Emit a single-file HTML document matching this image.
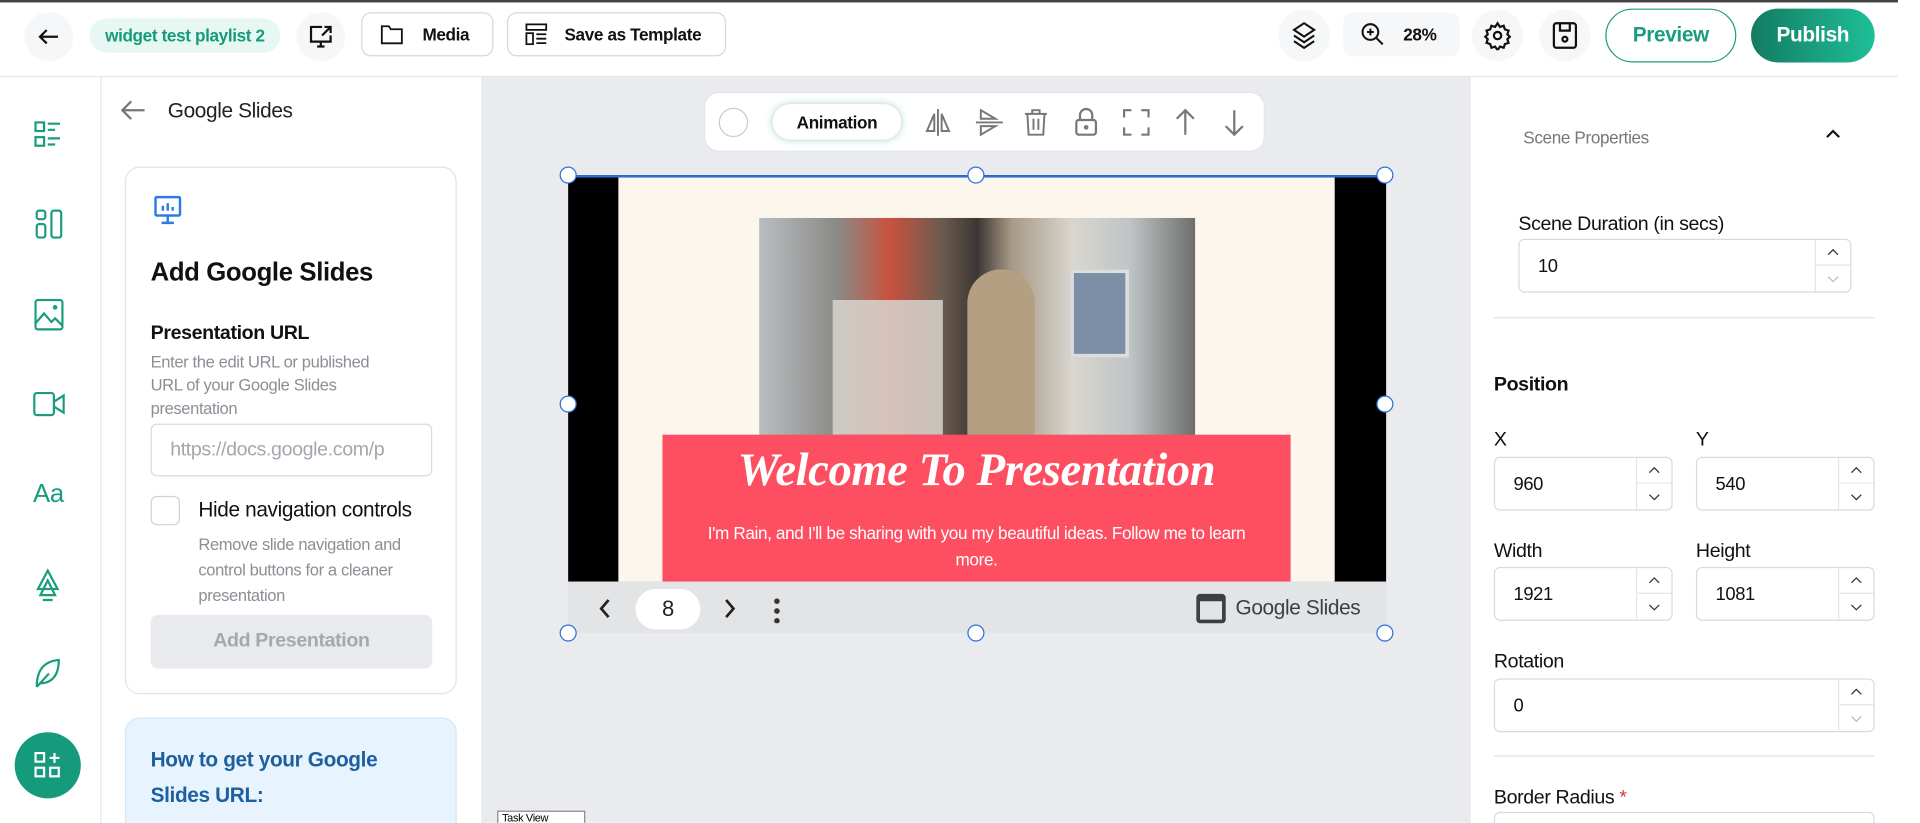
<!DOCTYPE html>
<html><head><meta charset="utf-8"><style>
*{box-sizing:border-box;margin:0;padding:0}
body{width:1920px;height:823px;overflow:hidden;background:#fff;font-family:"Liberation Sans",sans-serif}
#w{width:1568px;height:672px;transform:scale(1.22449);transform-origin:0 0;position:relative;background:#fff;overflow:hidden;letter-spacing:-0.3px}
.a{position:absolute}
.ib{position:absolute;border-radius:50%;background:#f6f7f8;display:flex;align-items:center;justify-content:center}
.btn{position:absolute;border:1px solid #d4d7db;border-radius:8px;background:#fff;display:flex;align-items:center;font-size:14px;color:#111;font-weight:bold}
.lbl{position:absolute;font-size:16px;color:#111}
.inp{position:absolute;border:1px solid #d7dbe0;border-radius:5px;background:#fff;font-size:15px;color:#111;padding-left:15px;display:flex;align-items:center}
.sp{position:absolute;right:0;top:0;bottom:0;width:29px;border-left:1px solid #e3e6ea}
.sp div{height:50%;display:flex;align-items:center;justify-content:center}
.sp div:first-child{border-bottom:1px solid #e3e6ea}
svg{display:block}
</style></head><body><div id="w">
<div class="a" style="left:0;top:0;width:1568px;height:2px;background:#444"></div>
<div class="a" style="left:0;top:62px;width:1550px;height:1px;background:#e4e6ea"></div>
<div class="ib" style="left:20px;top:10px;width:40px;height:40px"><svg width="22" height="22" viewBox="0 0 24 24" fill="none" stroke="#111" stroke-width="2"><path d="M20 12H4M10 6l-6 6 6 6"/></svg></div>
<div class="a" style="left:73px;top:15px;width:156px;height:28px;border-radius:14px;background:#e7f8f2;color:#169a7c;font-size:14px;font-weight:bold;display:flex;align-items:center;justify-content:center">widget test playlist 2</div>
<div class="ib" style="left:242px;top:10px;width:40px;height:40px"><svg width="24" height="24" viewBox="0 0 24 24" fill="none" stroke="#111" stroke-width="1.8"><path d="M13 4H4v12h16v-5M9 20h6M12 16v4M15 4h5v5M20 4l-7 7"/></svg></div>
<div class="btn" style="left:295px;top:10px;width:108px;height:36px;padding-left:14px"><svg width="20" height="18" viewBox="0 0 24 22" fill="none" stroke="#111" stroke-width="1.8"><path d="M2 3h7l2 3h11v14H2z"/></svg><span style="margin-left:15px">Media</span></div>
<div class="btn" style="left:414px;top:10px;width:179px;height:36px;padding-left:14px"><svg width="18" height="18" viewBox="0 0 20 20" fill="none" stroke="#111" stroke-width="1.6"><rect x="1" y="1" width="18" height="5"/><rect x="1" y="9" width="6" height="10"/><path d="M10 10h9M10 14h9M10 18h9"/></svg><span style="margin-left:14px">Save as Template</span></div>
<div class="ib" style="left:1044px;top:8px;width:42px;height:42px"><svg width="22" height="24" viewBox="0 0 24 26" fill="none" stroke="#111" stroke-width="1.8"><path d="M12 2l9 6-9 6-9-6z M3 13l9 6 9-6 M3 18l9 6 9-6"/></svg></div>
<div class="a" style="left:1097px;top:10px;width:95px;height:36px;border-radius:8px;background:#f6f7f8;display:flex;align-items:center;padding-left:13px;font-size:14px;font-weight:bold;color:#111"><svg width="22" height="22" viewBox="0 0 24 24" fill="none" stroke="#111" stroke-width="1.8"><circle cx="10" cy="10" r="7"/><path d="M15 15l6 6M10 7v6M7 10h6"/></svg><span style="margin-left:14px">28%</span></div>
<div class="ib" style="left:1202px;top:8px;width:42px;height:42px"><svg width="24" height="24" viewBox="0 0 24 24" fill="none" stroke="#111" stroke-width="1.8"><circle cx="12" cy="12" r="3"/><path d="M12 2l2 3 3-1 1 3 3 1-1 3 2 2-2 2 1 3-3 1-1 3-3-1-2 3-2-3-3 1-1-3-3-1 1-3-2-2 2-2-1-3 3-1 1-3 3 1z"/></svg></div>
<div class="ib" style="left:1257px;top:8px;width:42px;height:42px"><svg width="22" height="24" viewBox="0 0 22 24" fill="none" stroke="#111" stroke-width="1.8"><rect x="2" y="2" width="18" height="20" rx="2"/><path d="M7 2v6h8V2"/><circle cx="11" cy="15" r="2"/></svg></div>
<div class="a" style="left:1311px;top:7px;width:107px;height:44px;border:1.5px solid #1e9e82;border-radius:22px;color:#1a9c7d;font-size:17px;font-weight:bold;display:flex;align-items:center;justify-content:center">Preview</div>
<div class="a" style="left:1430px;top:7px;width:101px;height:44px;border-radius:22px;background:linear-gradient(90deg,#137b62,#1fbf98);color:#fff;font-size:17px;font-weight:bold;display:flex;align-items:center;justify-content:center">Publish</div>
<div class="a" style="left:82px;top:63px;width:1px;height:609px;background:#e4e6ea"></div>
<svg class="a" style="left:27px;top:98px" width="24" height="24" viewBox="0 0 24 24" fill="none" stroke="#1a9c7d" stroke-width="1.8"><rect x="2" y="2" width="7" height="7"/><rect x="2" y="14" width="7" height="7"/><path d="M12 3h10M12 8h6M12 15h10M12 20h6"/></svg>
<svg class="a" style="left:29px;top:170px" width="22" height="26" viewBox="0 0 22 26" fill="none" stroke="#1a9c7d" stroke-width="1.8"><rect x="1" y="2" width="7" height="7" rx="2"/><rect x="1" y="13" width="7" height="11" rx="2"/><rect x="13" y="2" width="8" height="22" rx="2"/></svg>
<svg class="a" style="left:28px;top:244px" width="24" height="26" viewBox="0 0 24 26" fill="none" stroke="#1a9c7d" stroke-width="1.8"><rect x="1" y="1" width="22" height="24" rx="2"/><path d="M1 20l7-8 6 7 3-3 6 6"/><circle cx="17" cy="7" r="1"/></svg>
<svg class="a" style="left:27px;top:320px" width="26" height="20" viewBox="0 0 26 20" fill="none" stroke="#1a9c7d" stroke-width="1.8"><rect x="1" y="1" width="16" height="18" rx="2"/><path d="M17 8l8-5v14l-8-5"/></svg>
<div class="a" style="left:27px;top:392px;font-size:21px;color:#1a9c7d">Aa</div>
<svg class="a" style="left:28px;top:464px" width="22" height="28" viewBox="0 0 22 28" fill="none" stroke="#1a9c7d" stroke-width="1.8"><path d="M11 2L3 17h16z M11 10L5 22h12z M7 26h8"/></svg>
<svg class="a" style="left:28px;top:537px" width="22" height="26" viewBox="0 0 22 26" fill="none" stroke="#1a9c7d" stroke-width="1.8"><path d="M2 24C2 10 8 3 20 2c0 13-6 19-15 19M2 24l10-11"/></svg>
<div class="a" style="left:12px;top:598px;width:54px;height:54px;border-radius:50%;background:#169a7c"><svg style="margin:16px" width="22" height="22" viewBox="0 0 22 22" fill="none" stroke="#fff" stroke-width="1.8"><rect x="1" y="1" width="7" height="7"/><rect x="1" y="13" width="7" height="7"/><rect x="13" y="13" width="7" height="7"/><path d="M16.5 1v8M12.5 5h8"/></svg></div>
<svg class="a" style="left:98px;top:80px" width="22" height="20" viewBox="0 0 24 22" fill="none" stroke="#777" stroke-width="2"><path d="M22 11H3M10 3l-8 8 8 8"/></svg>
<div class="a" style="left:137px;top:81px;font-size:17px;color:#222">Google Slides</div>
<div class="a" style="left:102px;top:136px;width:271px;height:431px;border:1px solid #e1e4e8;border-radius:12px"></div>
<svg class="a" style="left:125px;top:159px" width="24" height="26" viewBox="0 0 24 26" fill="none" stroke="#2b7be3" stroke-width="2"><rect x="2" y="2" width="20" height="15" rx="1"/><path d="M12 17v5M7 23h10M8 13V9M12 13V7M16 13v-3"/></svg>
<div class="a" style="left:123px;top:211px;font-size:21px;font-weight:bold;color:#111">Add Google Slides</div>
<div class="a" style="left:123px;top:264px;font-size:16px;color:#111;font-weight:bold">Presentation URL</div>
<div class="a" style="left:123px;top:286px;width:240px;font-size:13.5px;line-height:19px;color:#8a8f95;white-space:nowrap">Enter the edit URL or published<br>URL of your Google Slides<br>presentation</div>
<div class="inp" style="left:123px;top:346px;width:230px;height:43px;color:#a3a7ad;font-size:16px;overflow:hidden;white-space:nowrap">https://docs.google.com/p</div>
<div class="a" style="left:123px;top:405px;width:24px;height:24px;border:1px solid #cfd3d8;border-radius:5px"></div>
<div class="a" style="left:162px;top:407px;font-size:17px;color:#111">Hide navigation controls</div>
<div class="a" style="left:162px;top:434px;width:200px;font-size:13.5px;line-height:21px;color:#8a8f95">Remove slide navigation and control buttons for a cleaner presentation</div>
<div class="a" style="left:123px;top:502px;width:230px;height:44px;border-radius:6px;background:#e8eaed;color:#a5a9ae;font-size:16px;font-weight:bold;display:flex;align-items:center;justify-content:center">Add Presentation</div>
<div class="a" style="left:102px;top:586px;width:271px;height:100px;border:1px solid #d6e6f3;border-radius:12px;background:#e8f4fd"></div>
<div class="a" style="left:123px;top:606px;width:220px;font-size:17px;line-height:29px;color:#1d5fa0;font-weight:bold">How to get your Google Slides URL:</div>
<div class="a" style="left:393px;top:63px;width:807px;height:609px;background:#e9ebee"></div>
<div class="a" style="left:575px;top:75px;width:458px;height:49px;background:#fff;border-radius:12px;border:1px solid #e3e5e8"></div>
<div class="a" style="left:587px;top:88px;width:24px;height:24px;border:1px solid #ccc;border-radius:50%"></div>
<div class="a" style="left:630px;top:84px;width:107px;height:31px;border-radius:16px;background:#fff;box-shadow:0 0 6px #bfe6da;border:1px solid #e3e5e8;font-size:14px;font-weight:bold;color:#111;display:flex;align-items:center;justify-content:center">Animation</div>
<svg class="a" style="left:755px;top:88px" width="22" height="24" viewBox="0 0 22 24" fill="none" stroke="#777" stroke-width="1.6"><path d="M11 1v22M8 5L2 19h6zM14 5l6 14h-6z"/></svg>
<svg class="a" style="left:796px;top:88px" width="24" height="24" viewBox="0 0 24 24" fill="none" stroke="#777" stroke-width="1.6"><path d="M1 12h22M5 2v7l12-0zM5 22v-7l12 0z"/></svg>
<svg class="a" style="left:836px;top:88px" width="20" height="24" viewBox="0 0 20 24" fill="none" stroke="#777" stroke-width="1.6"><path d="M1 5h18M7 5V2h6v3M3 5l1 17h12l1-17M8 9v9M12 9v9"/></svg>
<svg class="a" style="left:877px;top:88px" width="20" height="24" viewBox="0 0 20 24" fill="none" stroke="#777" stroke-width="1.8"><rect x="2" y="10" width="16" height="12" rx="2"/><path d="M5 10V6a5 5 0 0110 0v4"/><circle cx="10" cy="16" r="1"/></svg>
<svg class="a" style="left:917px;top:89px" width="22" height="22" viewBox="0 0 22 22" fill="none" stroke="#777" stroke-width="1.8"><path d="M1 7V1h6M15 1h6v6M21 15v6h-6M7 21H1v-6"/></svg>
<svg class="a" style="left:958px;top:88px" width="20" height="24" viewBox="0 0 20 24" fill="none" stroke="#777" stroke-width="1.8"><path d="M10 22V2M3 9l7-7 7 7"/></svg>
<svg class="a" style="left:998px;top:88px" width="20" height="24" viewBox="0 0 20 24" fill="none" stroke="#777" stroke-width="1.8"><path d="M10 2v20M3 15l7 7 7-7"/></svg>
<div class="a" style="left:464px;top:143px;width:668px;height:332px;background:#000"></div>
<div class="a" style="left:464px;top:143px;width:668px;height:2px;background:#2f6fd6"></div>
<div class="a" style="left:505px;top:145px;width:585px;height:330px;background:#fdf6ec"></div>
<div class="a" style="left:620px;top:178px;width:356px;height:178px;background:linear-gradient(90deg,#b8bdc1 0%,#8a8a86 18%,#c8523f 30%,#6a5b4f 42%,#3b3633 50%,#a89a86 58%,#d9d6d0 72%,#bfc4c6 85%,#6e6f6c 100%)"></div>
<div class="a" style="left:680px;top:245px;width:90px;height:110px;background:#d8d5cf;opacity:.85"></div>
<div class="a" style="left:790px;top:220px;width:55px;height:136px;background:#b49f83;border-radius:30px 30px 0 0"></div>
<div class="a" style="left:874px;top:220px;width:48px;height:72px;background:#7d8fa6;border:3px solid #ddd"></div>
<div class="a" style="left:541px;top:355px;width:513px;height:120px;background:#fd4f61"></div>
<div class="a" style="left:541px;top:362px;width:513px;text-align:center;font-family:'Liberation Serif',serif;font-style:italic;font-weight:bold;font-size:38px;color:#fff">Welcome To Presentation</div>
<div class="a" style="left:541px;top:424px;width:513px;text-align:center;font-size:14px;line-height:22px;color:#fff;white-space:nowrap">I'm Rain, and I'll be sharing with you my beautiful ideas. Follow me to learn<br>more.</div>
<div class="a" style="left:464px;top:475px;width:668px;height:42px;background:#e3e4e6"></div>
<svg class="a" style="left:488px;top:488px" width="12" height="18" viewBox="0 0 12 18" fill="none" stroke="#222" stroke-width="2.2"><path d="M9 2L3 9l6 7"/></svg>
<div class="a" style="left:519px;top:481px;width:53px;height:33px;border-radius:17px;background:#fff;font-size:18px;color:#222;display:flex;align-items:center;justify-content:center">8</div>
<svg class="a" style="left:590px;top:488px" width="12" height="18" viewBox="0 0 12 18" fill="none" stroke="#222" stroke-width="2.2"><path d="M3 2l6 7-6 7"/></svg>
<div class="a" style="left:632px;top:487px;width:5px;height:22px;background:radial-gradient(circle,#333 2px,transparent 2.5px) 0 0/5px 8px repeat-y"></div>
<div class="a" style="left:977px;top:485px;width:24px;height:24px;border:3px solid #3c3f43;border-top-width:6px;border-radius:3px"></div>
<div class="a" style="left:1009px;top:487px;font-size:17px;color:#3c3f43">Google Slides</div>
<div class="a" style="left:457px;top:136px;width:14px;height:14px;border:1.5px solid #2f6fd6;border-radius:50%;background:#fff"></div>
<div class="a" style="left:790px;top:136px;width:14px;height:14px;border:1.5px solid #2f6fd6;border-radius:50%;background:#fff"></div>
<div class="a" style="left:1124px;top:136px;width:14px;height:14px;border:1.5px solid #2f6fd6;border-radius:50%;background:#fff"></div>
<div class="a" style="left:457px;top:323px;width:14px;height:14px;border:1.5px solid #2f6fd6;border-radius:50%;background:#fff"></div>
<div class="a" style="left:1124px;top:323px;width:14px;height:14px;border:1.5px solid #2f6fd6;border-radius:50%;background:#fff"></div>
<div class="a" style="left:457px;top:510px;width:14px;height:14px;border:1.5px solid #2f6fd6;border-radius:50%;background:#fff"></div>
<div class="a" style="left:790px;top:510px;width:14px;height:14px;border:1.5px solid #2f6fd6;border-radius:50%;background:#fff"></div>
<div class="a" style="left:1124px;top:510px;width:14px;height:14px;border:1.5px solid #2f6fd6;border-radius:50%;background:#fff"></div>
<div class="a" style="left:406px;top:662px;width:72px;height:12px;border:1px solid #888;background:#fff;font-size:9px;padding-left:3px;overflow:hidden">Task View</div>
<div class="a" style="left:1200px;top:63px;width:1px;height:609px;background:#e4e6ea"></div>
<div class="a" style="left:1244px;top:104px;font-size:14px;color:#777">Scene Properties</div>
<svg class="a" style="left:1490px;top:104px" width="14" height="10" viewBox="0 0 14 10" fill="none" stroke="#111" stroke-width="1.8"><path d="M2 8l5-5 5 5"/></svg>
<div class="lbl" style="left:1240px;top:175px">Scene Duration (in secs)</div>
<div class="inp" style="left:1240px;top:195px;width:272px;height:44px">10<div class="sp"><div><svg width="10" height="6"><path d="M1 5l4-4 4 4" fill="none" stroke="#333"/></svg></div><div><svg width="10" height="6"><path d="M1 1l4 4 4-4" fill="none" stroke="#bbb"/></svg></div></div></div>
<div class="a" style="left:1220px;top:259px;width:311px;height:1px;background:#dfe2e6"></div>
<div class="lbl" style="left:1220px;top:306px;font-weight:bold">Position</div>
<div class="lbl" style="left:1220px;top:351px">X</div>
<div class="lbl" style="left:1385px;top:351px">Y</div>
<div class="inp" style="left:1220px;top:373px;width:146px;height:44px">960<div class="sp"><div><svg width="10" height="6"><path d="M1 5l4-4 4 4" fill="none" stroke="#333"/></svg></div><div><svg width="10" height="6"><path d="M1 1l4 4 4-4" fill="none" stroke="#333"/></svg></div></div></div>
<div class="inp" style="left:1385px;top:373px;width:146px;height:44px">540<div class="sp"><div><svg width="10" height="6"><path d="M1 5l4-4 4 4" fill="none" stroke="#333"/></svg></div><div><svg width="10" height="6"><path d="M1 1l4 4 4-4" fill="none" stroke="#333"/></svg></div></div></div>
<div class="lbl" style="left:1220px;top:442px">Width</div>
<div class="lbl" style="left:1385px;top:442px">Height</div>
<div class="inp" style="left:1220px;top:463px;width:146px;height:44px">1921<div class="sp"><div><svg width="10" height="6"><path d="M1 5l4-4 4 4" fill="none" stroke="#333"/></svg></div><div><svg width="10" height="6"><path d="M1 1l4 4 4-4" fill="none" stroke="#333"/></svg></div></div></div>
<div class="inp" style="left:1385px;top:463px;width:146px;height:44px">1081<div class="sp"><div><svg width="10" height="6"><path d="M1 5l4-4 4 4" fill="none" stroke="#333"/></svg></div><div><svg width="10" height="6"><path d="M1 1l4 4 4-4" fill="none" stroke="#333"/></svg></div></div></div>
<div class="lbl" style="left:1220px;top:532px">Rotation</div>
<div class="inp" style="left:1220px;top:554px;width:311px;height:44px">0<div class="sp"><div><svg width="10" height="6"><path d="M1 5l4-4 4 4" fill="none" stroke="#333"/></svg></div><div><svg width="10" height="6"><path d="M1 1l4 4 4-4" fill="none" stroke="#bbb"/></svg></div></div></div>
<div class="a" style="left:1220px;top:617px;width:311px;height:1px;background:#dfe2e6"></div>
<div class="lbl" style="left:1220px;top:643px">Border Radius <span style="color:#e0323c">*</span></div>
<div class="a" style="left:1220px;top:663px;width:311px;height:20px;border:1px solid #d7dbe0;border-radius:5px"></div>
<div class="a" style="left:1550px;top:0;width:18px;height:672px;background:#fff"></div>
</div></body></html>
